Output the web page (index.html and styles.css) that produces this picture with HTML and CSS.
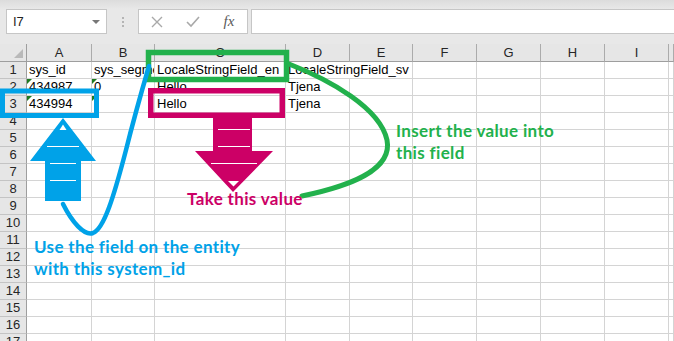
FILE: index.html
```html
<!DOCTYPE html>
<html>
<head>
<meta charset="utf-8">
<link rel="stylesheet" href="styles.css">
</head>
<body>
<div class="toolbar">
  <div class="namebox">I7<span class="drop"></span></div>
  <div class="grip"><i></i><i></i><i></i></div>
  <div class="fxbox">
    <span class="tool">
      <svg width="12" height="12" viewBox="0 0 12 12"><path d="M1 1L11 11M11 1L1 11" stroke="#a9a9a9" stroke-width="1.4" fill="none"/></svg>
    </span>
    <span class="tool">
      <svg width="14" height="12" viewBox="0 0 14 12"><path d="M1 6L5 10L13 1" stroke="#a9a9a9" stroke-width="1.6" fill="none"/></svg>
    </span>
    <span class="tool fx">fx</span>
  </div>
  <div class="formula"></div>
</div>

<div class="sheet">
  <div class="corner"></div>
  <div class="colhead">A</div><div class="colhead">B</div><div class="colhead">C</div><div class="colhead">D</div><div class="colhead">E</div><div class="colhead">F</div><div class="colhead">G</div><div class="colhead">H</div><div class="colhead">I</div><div class="colhead"></div>

  <div class="rowhead">1</div>
  <div class="cell">sys_id</div><div class="cell">sys_segment</div><div class="cell">LocaleStringField_en</div><div class="cell span2">LocaleStringField_sv</div><div class="cell"></div><div class="cell"></div><div class="cell"></div><div class="cell"></div><div class="cell"></div>

  <div class="rowhead">2</div>
  <div class="cell flag">434987</div><div class="cell flag">0</div><div class="cell">Hello</div><div class="cell">Tjena</div><div class="cell"></div><div class="cell"></div><div class="cell"></div><div class="cell"></div><div class="cell"></div><div class="cell"></div>

  <div class="rowhead">3</div>
  <div class="cell flag">434994</div><div class="cell flag"></div><div class="cell">Hello</div><div class="cell">Tjena</div><div class="cell"></div><div class="cell"></div><div class="cell"></div><div class="cell"></div><div class="cell"></div><div class="cell"></div>

  <div class="rowhead">4</div>
  <div class="cell"></div><div class="cell"></div><div class="cell"></div><div class="cell"></div><div class="cell"></div><div class="cell"></div><div class="cell"></div><div class="cell"></div><div class="cell"></div><div class="cell"></div>
  <div class="rowhead">5</div>
  <div class="cell"></div><div class="cell"></div><div class="cell"></div><div class="cell"></div><div class="cell"></div><div class="cell"></div><div class="cell"></div><div class="cell"></div><div class="cell"></div><div class="cell"></div>
  <div class="rowhead">6</div>
  <div class="cell"></div><div class="cell"></div><div class="cell"></div><div class="cell"></div><div class="cell"></div><div class="cell"></div><div class="cell"></div><div class="cell"></div><div class="cell"></div><div class="cell"></div>
  <div class="rowhead">7</div>
  <div class="cell"></div><div class="cell"></div><div class="cell"></div><div class="cell"></div><div class="cell"></div><div class="cell"></div><div class="cell"></div><div class="cell"></div><div class="cell"></div><div class="cell"></div>
  <div class="rowhead">8</div>
  <div class="cell"></div><div class="cell"></div><div class="cell"></div><div class="cell"></div><div class="cell"></div><div class="cell"></div><div class="cell"></div><div class="cell"></div><div class="cell"></div><div class="cell"></div>
  <div class="rowhead">9</div>
  <div class="cell"></div><div class="cell"></div><div class="cell"></div><div class="cell"></div><div class="cell"></div><div class="cell"></div><div class="cell"></div><div class="cell"></div><div class="cell"></div><div class="cell"></div>
  <div class="rowhead">10</div>
  <div class="cell"></div><div class="cell"></div><div class="cell"></div><div class="cell"></div><div class="cell"></div><div class="cell"></div><div class="cell"></div><div class="cell"></div><div class="cell"></div><div class="cell"></div>
  <div class="rowhead">11</div>
  <div class="cell"></div><div class="cell"></div><div class="cell"></div><div class="cell"></div><div class="cell"></div><div class="cell"></div><div class="cell"></div><div class="cell"></div><div class="cell"></div><div class="cell"></div>
  <div class="rowhead">12</div>
  <div class="cell"></div><div class="cell"></div><div class="cell"></div><div class="cell"></div><div class="cell"></div><div class="cell"></div><div class="cell"></div><div class="cell"></div><div class="cell"></div><div class="cell"></div>
  <div class="rowhead">13</div>
  <div class="cell"></div><div class="cell"></div><div class="cell"></div><div class="cell"></div><div class="cell"></div><div class="cell"></div><div class="cell"></div><div class="cell"></div><div class="cell"></div><div class="cell"></div>
  <div class="rowhead">14</div>
  <div class="cell"></div><div class="cell"></div><div class="cell"></div><div class="cell"></div><div class="cell"></div><div class="cell"></div><div class="cell"></div><div class="cell"></div><div class="cell"></div><div class="cell"></div>
  <div class="rowhead">15</div>
  <div class="cell"></div><div class="cell"></div><div class="cell"></div><div class="cell"></div><div class="cell"></div><div class="cell"></div><div class="cell"></div><div class="cell"></div><div class="cell"></div><div class="cell"></div>
  <div class="rowhead">16</div>
  <div class="cell"></div><div class="cell"></div><div class="cell"></div><div class="cell"></div><div class="cell"></div><div class="cell"></div><div class="cell"></div><div class="cell"></div><div class="cell"></div><div class="cell"></div>
  <div class="rowhead">17</div>
  <div class="cell"></div><div class="cell"></div><div class="cell"></div><div class="cell"></div><div class="cell"></div><div class="cell"></div><div class="cell"></div><div class="cell"></div><div class="cell"></div><div class="cell"></div>
</div>

<!-- paint annotations drawn over the sheet -->
<svg class="ink" width="674" height="341" viewBox="0 0 674 341">
  <rect x="150.75" y="90.75" width="131.5" height="24.5" fill="none" stroke="#cc0066" stroke-width="5.5"/>
  <polygon points="213,114 252,114 252,151 273,151 233,192 195,151 213,151" fill="#cc0066"/>
  <g stroke="#fff" stroke-width="1">
    <line x1="218" y1="129.5" x2="250" y2="129.5"/>
    <line x1="218" y1="146.5" x2="250" y2="146.5"/>
    <line x1="211" y1="163.5" x2="257" y2="163.5"/>
  </g>
  <polygon points="228,181 239,181 233.5,186.5" fill="#fff"/>

  <rect x="148.5" y="52.5" width="138" height="27" fill="none" stroke="#22b14c" stroke-width="5.5"/>
  <path d="M289,64 C330,80 380,108 387,140 C393,170 350,186 302,196" fill="none" stroke="#22b14c" stroke-width="5" stroke-linecap="round"/>

  <rect x="2.5" y="91" width="94" height="24.5" fill="none" stroke="#00a2e8" stroke-width="5"/>
  <polygon points="63,118 96,161 81,161 81,201 45,201 45,161 30,161" fill="#00a2e8"/>
  <g stroke="#fff" stroke-width="1">
    <line x1="47" y1="146.5" x2="79" y2="146.5"/>
    <line x1="50" y1="163.5" x2="76" y2="163.5"/>
    <line x1="50" y1="180.5" x2="76" y2="180.5"/>
  </g>
  <polygon points="63,124.5 59.5,130 66.5,130" fill="#fff"/>
  <path d="M63,204 C72,222 84,236 93,233 C104,229 114,196 126,150 C134,118 142,90 149,66" fill="none" stroke="#00a2e8" stroke-width="4.5" stroke-linecap="round"/>
</svg>

<div class="note note-take">Take this value</div>
<div class="note note-insert">Insert the value into<br>this field</div>
<div class="note note-use">Use the field on the entity<br>with this system_id</div>
</body>
</html>
```

FILE: styles.css
```css
body
{
margin: 0;
width: 674px;
height: 341px;
overflow: hidden;
position: relative;
background: #fff;
font-family: "Liberation Sans", Arial, sans-serif;
font-size: 13px;
color: #000;
}

/* formula bar area */
.toolbar
{
height: 44px;
box-sizing: border-box;
padding: 9px 0 0 6px;
display: flex;
align-items: flex-start;
background: linear-gradient(#dcdcdc, #e8e8e8 9px, #e8e8e8);
}
.namebox
{
position: relative;
width: 101px;
height: 25px;
box-sizing: border-box;
border: 1px solid #c6c6c6;
background: #fff;
padding-left: 6px;
line-height: 23px;
color: #222;
}
.drop
{
position: absolute;
right: 6px;
top: 10px;
border-left: 4px solid transparent;
border-right: 4px solid transparent;
border-top: 4px solid #777;
}
.grip
{
width: 31px;
height: 25px;
display: flex;
flex-direction: column;
align-items: center;
justify-content: center;
gap: 2px;
}
.grip i
{
width: 2px;
height: 2px;
background: #b4b4b4;
}
.fxbox
{
width: 110px;
height: 25px;
box-sizing: border-box;
border: 1px solid #c6c6c6;
background: #fff;
display: flex;
}
.tool
{
width: 36px;
height: 23px;
display: flex;
align-items: center;
justify-content: center;
}
.fx
{
font-family: "Liberation Serif", serif;
font-style: italic;
font-size: 15px;
color: #5a5a5a;
}
.formula
{
flex: 1;
height: 25px;
margin-left: 3px;
box-sizing: border-box;
border: 1px solid #c6c6c6;
border-right: none;
background: #fff;
}

/* the grid */
.sheet
{
display: grid;
grid-template-columns: 27px 65px 63px 131px 64px 63px 64px 64px 64px 64px 1fr;
grid-template-rows: 18px repeat(17, 17px);
}
.corner,
.colhead,
.rowhead,
.cell
{
box-sizing: border-box;
white-space: nowrap;
overflow: hidden;
}
.corner
{
position: relative;
background: #e6e6e6;
border-right: 1px solid #9e9e9e;
border-bottom: 1px solid #9e9e9e;
}
.corner::after
{
content: "";
position: absolute;
right: 3px;
bottom: 3px;
border-left: 9px solid transparent;
border-bottom: 9px solid #b9b9b9;
}
.colhead
{
background: #e6e6e6;
border-right: 1px solid #ababab;
border-bottom: 1px solid #9e9e9e;
text-align: center;
line-height: 17px;
color: #262626;
}
.rowhead
{
background: #e6e6e6;
border-right: 1px solid #9e9e9e;
border-bottom: 1px solid #c4c4c4;
text-align: center;
line-height: 16px;
color: #262626;
}
.cell
{
position: relative;
border-right: 1px solid #d4d4d4;
border-bottom: 1px solid #d4d4d4;
padding: 0 2px;
line-height: 16px;
}
.span2
{
grid-column: span 2;
}
.flag::before
{
content: "";
position: absolute;
left: 0;
top: 0;
border-top: 5px solid #1f7a1f;
border-right: 5px solid transparent;
}

/* annotations */
.ink
{
position: absolute;
left: 0;
top: 0;
pointer-events: none;
}
.note
{
position: absolute;
font-family: Lato, "Open Sans", sans-serif;
font-weight: bold;
font-size: 17px;
letter-spacing: 0.35px;
line-height: 22px;
white-space: nowrap;
}
.note-take
{
left: 187px;
top: 188px;
color: #cc0066;
}
.note-insert
{
left: 396px;
top: 120px;
color: #22b14c;
}
.note-use
{
left: 34px;
top: 236px;
color: #00a2e8;
}
```
